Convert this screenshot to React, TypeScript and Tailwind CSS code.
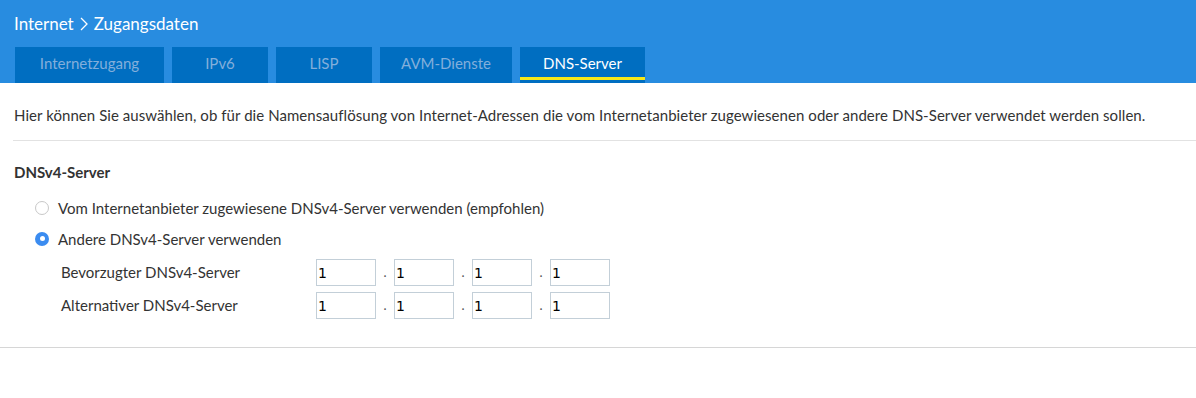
import React from "react";

const tabs = [
  { label: "Internetzugang", w: "w-[149px]" },
  { label: "IPv6", w: "w-[96px]" },
  { label: "LISP", w: "w-[96px]" },
  { label: "AVM-Dienste", w: "w-[132px]" },
  { label: "DNS-Server", w: "w-[125px]", active: true },
];

const IpInput = () => (
  <div className="flex items-center">
    {[0, 1, 2, 3].map((i) => (
      <React.Fragment key={i}>
        {i > 0 && <span className="w-[18px] text-center text-[13px] text-[#555]">.</span>}
        <input
          defaultValue="1"
          className="w-[60px] h-[27px] border border-[#c3cfd8] bg-white px-[1px] text-[14px] text-black outline-none font-['DejaVu_Sans',sans-serif]"
        />
      </React.Fragment>
    ))}
  </div>
);

const Radio = ({ checked }: { checked?: boolean }) =>
  checked ? (
    <span className="w-[14px] h-[14px] rounded-full bg-[#3b8cf0] flex items-center justify-center">
      <span className="w-[5px] h-[5px] rounded-full bg-white" />
    </span>
  ) : (
    <span className="w-[14px] h-[14px] rounded-full border border-[#c8c8c8] bg-white" />
  );

export default function App() {
  return (
    <div className="w-[1196px] h-[398px] bg-white font-['Lato',sans-serif] text-[#333]">
      <div className="bg-[#288ce0] h-[83px] flex flex-col">
        <div className="h-[47px] pl-[14px] pt-[11px] text-white text-[17px] flex items-start gap-[6px]">
          <span>Internet</span>
          <svg width="8" height="14" viewBox="0 0 8 14" className="mt-[6px]" fill="none" stroke="white" strokeWidth="1.3">
            <path d="M1 1l6 6-6 6" />
          </svg>
          <span>Zugangsdaten</span>
        </div>
        <div className="flex gap-[8px] pl-[15px] h-[36px]">
          {tabs.map((t) => (
            <div
              key={t.label}
              className={`${t.w} bg-[#006ec1] flex flex-col items-center justify-between pt-[5px] text-[15px] ${
                t.active ? "text-white" : "text-[#83afdb]"
              }`}>
              <span>{t.label}</span>
              <span className={`w-full h-[3px] mb-[3px] ${t.active ? "bg-[#f6e718]" : ""}`} />
            </div>
          ))}
        </div>
      </div>

      <p className="pl-[14px] pt-[21px] pb-[13px] text-[15px] tracking-[0.06px]">
        Hier können Sie auswählen, ob für die Namensauflösung von Internet-Adressen die vom Internetanbieter
        zugewiesenen oder andere DNS-Server verwendet werden sollen.
      </p>
      <div className="ml-[13px] h-[1px] bg-[#e2e2e2]" />

      <div className="pl-[14px] pt-[20px] pb-[28px]">
        <div className="font-bold text-[15px]">DNSv4-Server</div>
        <div className="pl-[21px] pt-[14px] flex flex-col gap-[8px] text-[15px]">
          <label className="flex items-center gap-[9px]">
            <Radio />
            <span>Vom Internetanbieter zugewiesene DNSv4-Server verwenden (empfohlen)</span>
          </label>
          <label className="flex items-center gap-[9px]">
            <Radio checked />
            <span>Andere DNSv4-Server verwenden</span>
          </label>
        </div>
        <div className="pl-[47px] pt-[9px] flex flex-col gap-[6px] text-[15px]">
          <div className="flex items-center">
            <span className="w-[255px]">Bevorzugter DNSv4-Server</span>
            <IpInput />
          </div>
          <div className="flex items-center">
            <span className="w-[255px]">Alternativer DNSv4-Server</span>
            <IpInput />
          </div>
        </div>
      </div>
      <div className="h-[1px] bg-[#d6d6d6]" />
    </div>
  );
}
